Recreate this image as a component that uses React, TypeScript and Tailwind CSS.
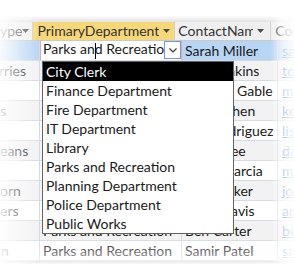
import React from "react";

type Row = { c1: string; c1ml: string; c2: string; c3: string; c4: string; sel?: boolean };

const rows: Row[] = [
  { c1: "", c1ml: "ml-0", c2: "Parks and Recreation", c3: "Sarah Miller", c4: "sarah.miller@city.gov", sel: true },
  { c1: "rries", c1ml: "-ml-[1px]", c2: "City Clerk", c3: "Tom Jenkins", c4: "tom.jenkins@city.gov" },
  { c1: "", c1ml: "ml-0", c2: "Finance Department", c3: "Michael Gable", c4: "mgable@city.gov" },
  { c1: "s", c1ml: "ml-0", c2: "Fire Department", c3: "Kevin Chen", c4: "kevin.chen@city.gov" },
  { c1: "", c1ml: "ml-0", c2: "IT Department", c3: "Lisa Rodriguez", c4: "lisa.r@city.gov" },
  { c1: "eans", c1ml: "ml-0", c2: "Library", c3: "David Lee", c4: "david.lee@city.gov" },
  { c1: "", c1ml: "ml-0", c2: "Police Department", c3: "Maria Garcia", c4: "maria.g@city.gov" },
  { c1: "orn", c1ml: "ml-0", c2: "Public Works", c3: "John Baker", c4: "john.baker@city.gov" },
  { c1: "ers", c1ml: "ml-0", c2: "Planning Department", c3: "Anna Davis", c4: "anna.davis@city.gov" },
  { c1: "", c1ml: "ml-0", c2: "Parks and Recreation", c3: "Ben Carter", c4: "ben.carter@city.gov" },
  { c1: "n", c1ml: "ml-[1px]", c2: "Parks and Recreation", c3: "Samir Patel", c4: "samir.patel@city.gov" },
];

const options = [
  "City Clerk",
  "Finance Department",
  "Fire Department",
  "IT Department",
  "Library",
  "Parks and Recreation",
  "Planning Department",
  "Police Department",
  "Public Works",
];

function Arrow() {
  return (
    <svg width="7" height="4" viewBox="0 0 7 4" className="shrink-0">
      <path d="M0 0 H7 L3.5 4 Z" fill="#4a4a4a" />
    </svg>
  );
}

export default function App() {
  return (
    <div className="relative w-[294px] h-[265px] overflow-hidden bg-white font-['Lato',sans-serif] text-[14px] leading-none text-[#1a1a1a]">
      <div className="h-[22px] bg-gradient-to-b from-white from-[70%] to-[#e2e2e2]" />
      {/* header */}
      <div className="flex h-[19px] border-b border-[#c9c9c9] bg-[#efefef] text-[#333]">
        <div className="flex w-[40px] items-center border-r border-[#d0d0d0] pr-[3px]">
          <span className="flex-1 overflow-hidden whitespace-nowrap">ype</span>
          <Arrow />
        </div>
        <div className="flex w-[142px] items-center border-r border-[#d0d0d0] bg-[#f7d879] pl-[4px] pr-[4px]">
          <span className="mr-[4px] flex-1 overflow-hidden whitespace-nowrap">PrimaryDepartment</span>
          <Arrow />
        </div>
        <div className="flex w-[96px] items-center border-r border-[#d0d0d0] pl-[3px] pr-[6px]">
          <span className="mr-[4px] flex-1 overflow-hidden whitespace-nowrap">ContactName</span>
          <Arrow />
        </div>
        <div className="flex flex-1 items-center pl-[4px]">
          <span className="overflow-hidden whitespace-nowrap">ContactEmail</span>
        </div>
      </div>
      {/* rows */}
      {rows.map((r, i) => {
        const bg = r.sel ? "bg-[#b8d5f3]" : i % 2 === 1 ? "bg-[#f2f2f2]" : "bg-white";
        return (
          <div key={i} className={`flex h-[20px] border-b border-[#d5dbe4] ${bg}`}>
            <div className="flex w-[40px] items-center overflow-hidden border-r border-[#d5dbe4]">
              <span className={`whitespace-nowrap ${r.c1ml}`}>{r.c1}</span>
            </div>
            {r.sel ? (
              <div className="flex w-[142px] items-center border-x border-[#f0a4a8] bg-white pl-[2px]">
                <span className="flex-1 overflow-hidden whitespace-nowrap">
                  Parks an
                  <span className="-mr-px inline-block h-[16px] w-px bg-black align-middle" />
                  d Recreation
                </span>
                <div className="flex h-[18px] w-[17px] shrink-0 items-center justify-center self-start border border-[#6e9bd8] bg-white">
                  <svg width="8" height="5" viewBox="0 0 8 5">
                    <path d="M0.5 0.5 L4 4 L7.5 0.5" fill="none" stroke="#333" strokeWidth="1.1" />
                  </svg>
                </div>
              </div>
            ) : (
              <div className="flex w-[142px] items-center overflow-hidden border-r border-[#d5dbe4] pl-[3px]">
                <span className="whitespace-nowrap">{r.c2}</span>
              </div>
            )}
            <div className="flex w-[96px] items-center overflow-hidden border-r border-[#d5dbe4] pl-[3px]">
              <span className="whitespace-nowrap">{r.c3}</span>
            </div>
            <div className="flex flex-1 items-center overflow-hidden pl-[4px]">
              <span className="whitespace-nowrap text-[#0563c1] underline">{r.c4}</span>
            </div>
          </div>
        );
      })}
      <div className="h-[4px] bg-gradient-to-b from-[#c4c4c4] to-white" />

      {/* dropdown list */}
      <div className="absolute left-[42px] top-[61px] w-[192px] border border-[#646464] bg-white">
        {options.map((o, i) => (
          <div
            key={o}
            className={`flex h-[19px] items-center whitespace-nowrap pl-[3px] ${i === 0 ? "bg-black text-white" : "text-[#1a1a1a]"}`}
          >
            {o}
          </div>
        ))}
      </div>

      {/* soft edge fades */}
      <div className="pointer-events-none absolute left-0 top-0 h-full w-[40px] bg-gradient-to-r from-white/90 to-transparent" />
      <div className="pointer-events-none absolute right-0 top-0 h-full w-[24px] bg-gradient-to-r from-transparent via-white/70 to-white/95" />
      <div className="pointer-events-none absolute bottom-0 left-0 h-[27px] w-full bg-gradient-to-b from-transparent to-white/70" />
    </div>
  );
}
